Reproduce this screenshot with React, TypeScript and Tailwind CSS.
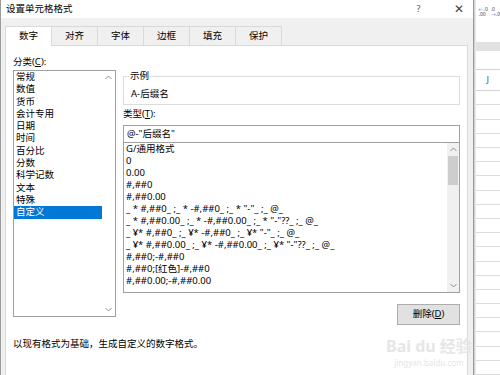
const categories = [
  "常规",
  "数值",
  "货币",
  "会计专用",
  "日期",
  "时间",
  "百分比",
  "分数",
  "科学记数",
  "文本",
  "特殊",
  "自定义",
];

const formats = [
  "G/通用格式",
  "0",
  "0.00",
  "#,##0",
  "#,##0.00",
  '_ * #,##0_ ;_ * -#,##0_ ;_ * "-"_ ;_ @_',
  '_ * #,##0.00_ ;_ * -#,##0.00_ ;_ * "-"??_ ;_ @_',
  '_ ¥* #,##0_ ;_ ¥* -#,##0_ ;_ ¥* "-"_ ;_ @_',
  '_ ¥* #,##0.00_ ;_ ¥* -#,##0.00_ ;_ ¥* "-"??_ ;_ @_',
  "#,##0;-#,##0",
  "#,##0;[红色]-#,##0",
  "#,##0.00;-#,##0.00",
];

const tabs = ["数字", "对齐", "字体", "边框", "填充", "保护"];

function Chevron({ up }: { up?: boolean }) {
  return (
    <svg width="7" height="5" viewBox="0 0 7 5" fill="none">
      <path
        d={up ? "M0.5 4L3.5 1L6.5 4" : "M0.5 1L3.5 4L6.5 1"}
        stroke="#8c8c8c"
        strokeWidth="1"
      />
    </svg>
  );
}

function CategoryList() {
  return (
    <div className="flex h-[247px] w-[103px] border border-[#a0a0a0] bg-white">
      <div className="flex flex-1 flex-col">
        {categories.map((c, i) => (
          <div
            key={c}
            className={
              i === categories.length - 1
                ? "h-[12.3px] pl-[2px] leading-[12.3px] bg-[#0078d7] text-white"
                : "h-[12.3px] pl-[2px] leading-[12.3px]"
            }
          >
            {c}
          </div>
        ))}
      </div>
      <div className="flex w-[13px] flex-col items-center justify-between py-[4px]">
        <Chevron up />
        <Chevron />
      </div>
    </div>
  );
}

function FormatList() {
  return (
    <div className="flex h-[150px] border border-t-0 border-[#a0a0a0] bg-white">
      <div className="flex flex-1 flex-col overflow-hidden">
        {formats.map((f) => (
          <div key={f} className="h-[12px] pl-[2px] leading-[12px] whitespace-pre">
            {f}
          </div>
        ))}
      </div>
      <div className="flex w-[12px] flex-col items-center bg-[#f0f0f0] py-[4px]">
        <Chevron up />
        <div className="mt-[4px] h-[29px] w-[10px] bg-[#cdcdcd]" />
        <div className="flex-1" />
        <Chevron />
      </div>
    </div>
  );
}

function ExcelStrip() {
  return (
    <div className="flex flex-1 flex-col bg-white">
      <div className="flex h-[43px] gap-[3px] pl-[3px] pt-[7px] text-[5px] leading-[5px] text-[#444]">
        <div className="flex flex-col">
          <span>
            <span className="text-[#2f6fbf]">←</span>.0
          </span>
          <span>.00</span>
        </div>
        <div className="flex flex-col">
          <span>.0</span>
          <span>
            <span className="text-[#2f6fbf]">→</span>.0
          </span>
        </div>
      </div>
      <div className="h-[9px] bg-[#e1e1e1]" />
      <div className="h-[18px]" />
      <div className="flex h-[23px] items-center justify-center border-y border-[#d4d4d4] text-[8px] text-[#444]">
        J
      </div>
      <div className="flex flex-1 flex-col">
        {Array.from({ length: 20 }).map((_, i) => (
          <div key={i} className="h-[14.2px] shrink-0 border-b border-[#dcdcdc]" />
        ))}
      </div>
    </div>
  );
}

export default function App() {
  return (
    <div className="relative flex h-[375px] w-[500px] overflow-hidden bg-white font-['Noto_Sans','Noto_Sans_CJK_SC',sans-serif] text-[9.5px] text-black">
      {/* dialog */}
      <div className="flex w-[474px] flex-col border-l border-r border-[#9a9a9a] bg-[#f0f0f0]">
        <div className="flex h-[18px] items-center bg-white pl-[5px] text-[9.5px]">
          <span className="flex-1">设置单元格格式</span>
          <span className="w-[20px] text-[9px] text-[#555]">?</span>
          <span className="mr-[9px] ml-[17px] text-[12px] font-light leading-none text-[#444]">
            ✕
          </span>
        </div>
        <div className="flex items-end pl-[4px] pt-[8px]">
          {tabs.map((t, i) =>
            i === 0 ? (
              <div
                key={t}
                className="relative z-10 -mb-px flex h-[20px] w-[47px] items-center justify-center border border-b-0 border-[#d9d9d9] bg-white"
              >
                {t}
              </div>
            ) : (
              <div
                key={t}
                className="flex h-[19px] w-[46px] items-center justify-center border-t border-r border-[#d9d9d9]"
              >
                {t}
              </div>
            ),
          )}
        </div>
        <div className="mr-[5px] ml-[4px] flex flex-1 flex-col border-t border-r border-l border-[#d9d9d9] bg-white pt-[10px] pl-[7px]">
          <div className="flex gap-[7px]">
            <div className="flex flex-col">
              <div className="h-[12px] leading-[12px]">
                分类(<span className="underline">C</span>):
              </div>
              <div className="mt-[2px]">
                <CategoryList />
              </div>
            </div>
            <div className="flex w-[337px] flex-col">
              <fieldset className="mt-[14px] border border-[#dcdcdc] px-[5px] pt-[6px] pb-[4px]">
                <legend className="px-[1px] leading-[12px]">示例</legend>
                <div className="pl-[2px] leading-[12px]">A-后缀名</div>
              </fieldset>
              <div className="mt-[3px] h-[12px] leading-[12px]">
                类型(<span className="underline">T</span>):
              </div>
              <div className="mt-[5px] flex h-[18px] items-center border border-[#a0a0a0] pl-[3px]">
                @-"后缀名"
              </div>
              <FormatList />
              <div className="mt-[11px] flex h-[21px] w-[63px] items-center justify-center self-end border border-[#adadad] bg-[#e1e1e1]">
                删除(<span className="underline">D</span>)
              </div>
            </div>
          </div>
          <div className="mt-[13px] leading-[12px]">
            以现有格式为基础，生成自定义的数字格式。
          </div>
        </div>
      </div>
      <div className="w-[2px] bg-gradient-to-r from-[#c8c8c8] to-[#f4f4f4]" />
      <ExcelStrip />
      {/* watermark */}
      <div className="pointer-events-none absolute top-[336px] left-[386px] flex flex-col items-center gap-[2px] text-[#e6e6e6]">
        <span className="text-[16px] font-bold leading-[20px]">Bai du 经验</span>
        <span className="text-[8px] leading-[10px]">jingyan.baidu.com</span>
      </div>
    </div>
  );
}
